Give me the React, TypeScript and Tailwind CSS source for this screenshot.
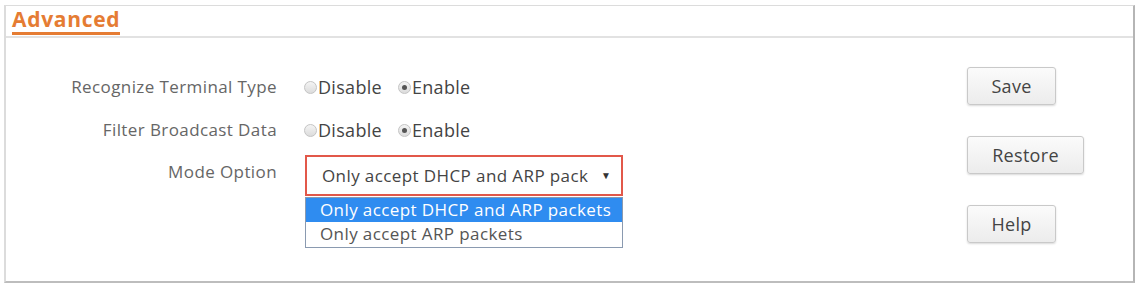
import React from "react";

const font = { fontFamily: '"Open Sans", "Noto Sans", sans-serif' };

const Radio = ({ checked }: { checked?: boolean }) => (
  <span className="inline-flex h-[13px] w-[13px] items-center justify-center rounded-full border border-[#c4c4c4] bg-gradient-to-b from-[#f4f4f4] to-[#dcdcdc]">
    {checked && <span className="h-[5px] w-[5px] rounded-full bg-[#555]" />}
  </span>
);

const RadioPair = ({ value }: { value: "disable" | "enable" }) => (
  <div className="flex items-center text-[18px] tracking-[0.3px] text-[#444]">
    <label className="flex items-center gap-[1px]">
      <Radio checked={value === "disable"} />
      Disable
    </label>
    <label className="ml-[16px] flex items-center gap-[1px]">
      <Radio checked={value === "enable"} />
      Enable
    </label>
  </div>
);

const Btn = ({ children, w }: { children: React.ReactNode; w: string }) => (
  <button
    className={`${w} h-[38px] rounded-[3px] border border-[#c9c9c9] bg-gradient-to-b from-[#fbfbfb] to-[#ececec] text-[18px] tracking-[0.3px] text-[#444] shadow-[0_1px_2px_rgba(0,0,0,0.15)]`}
  >
    {children}
  </button>
);

export default function App() {
  return (
    <div className="h-[284px] w-[1139px] bg-white pt-[5px] pl-[4px]" style={font}>
      <div className="h-[278px] w-[1131px] border-2 border-t border-[#dcdcdc] border-r-[#b5b5b5] border-b-[#bdbdbd]">
        <div className="h-[32px] border-b-2 border-[#e2e2e2] pl-[6px] pt-[1px]">
          <span className="inline-block border-b-[3px] border-[#e57c33] text-[21px] leading-[25px] font-bold tracking-[0.7px] text-[#e57c33]">
            Advanced
          </span>
        </div>
        <div className="flex">
          <div className="flex flex-col pt-[34px]">
            <div className="flex h-[30px] items-center">
              <span className="w-[271px] text-right text-[17px] tracking-[0.4px] text-[#666]">Recognize Terminal Type</span>
              <div className="ml-[27px]">
                <RadioPair value="enable" />
              </div>
            </div>
            <div className="mt-[13px] flex h-[30px] items-center">
              <span className="w-[271px] text-right text-[17px] tracking-[0.4px] text-[#666]">Filter Broadcast Data</span>
              <div className="ml-[27px]">
                <RadioPair value="enable" />
              </div>
            </div>
            <div className="mt-[10px] flex items-start">
              <span className="mt-[4px] w-[271px] text-right text-[17px] tracking-[0.4px] text-[#666]">Mode Option</span>
              <div className="relative ml-[28px]">
                <div className="flex h-[41px] w-[318px] items-center border-2 border-[#e2584a] pl-[15px] text-[17px] tracking-[0.4px] text-[#444]">
                  <span className="w-[266px] shrink-0 overflow-hidden whitespace-nowrap">Only accept DHCP and ARP packets</span>
                  <span className="ml-[13px] shrink-0 text-[10px] text-[#333]">▼</span>
                </div>
                <div className="absolute left-0 top-[42px] w-[318px] border border-[#8a9ab0] bg-white text-[17px] tracking-[0.4px]">
                  <div className="h-[24px] bg-[#2f8cf0] pl-[14px] leading-[24px] whitespace-nowrap text-white">
                    Only accept DHCP and ARP packets
                  </div>
                  <div className="h-[25px] pl-[14px] leading-[24px] text-[#555]">
                    Only accept ARP packets
                  </div>
                </div>
              </div>
            </div>
          </div>
          <div className="ml-auto mr-[49px] flex flex-col gap-[31px] pt-[29px]">
            <Btn w="w-[89px]">Save</Btn>
            <Btn w="w-[117px]">Restore</Btn>
            <Btn w="w-[89px]">Help</Btn>
          </div>
        </div>
      </div>
    </div>
  );
}
